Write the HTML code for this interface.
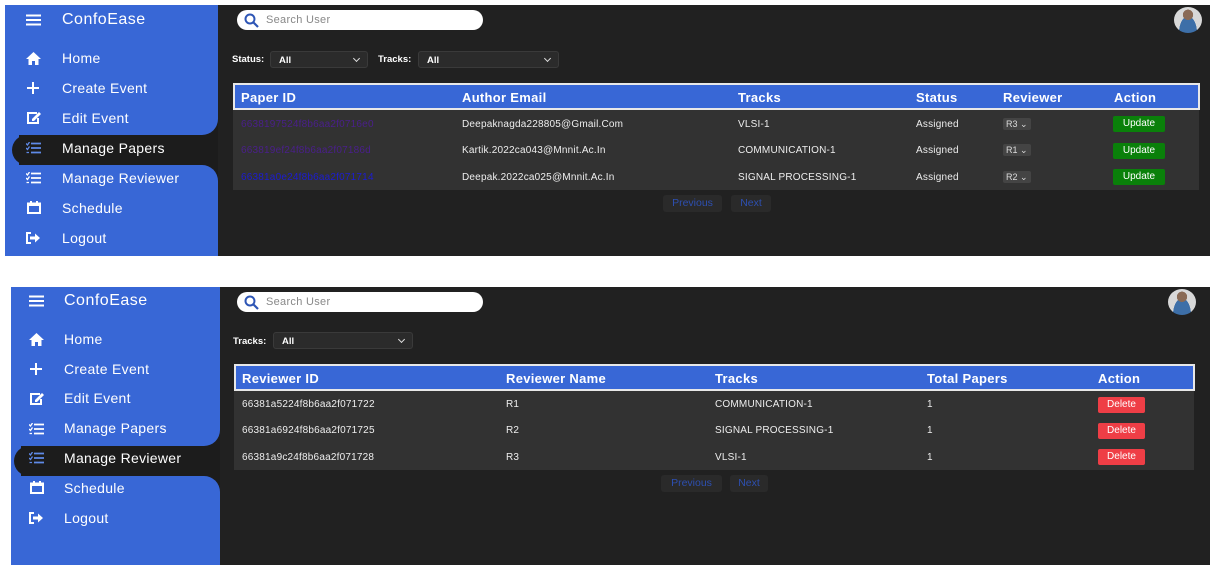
<!DOCTYPE html>
<html><head><meta charset="utf-8">
<style>
*{margin:0;padding:0;box-sizing:border-box}
body{width:1210px;height:565px;background:#fff;position:relative;overflow:hidden;font-family:"Liberation Sans",sans-serif}
svg{display:block}
.abs{position:absolute}
.main{position:absolute;background:#212121}
.sb{position:absolute;background:#1c1c1c}
.blue{background:#3867d6;position:absolute;left:0;right:0}
.pill{position:absolute;background:#1c1c1c;border-radius:16px 0 0 16px}
.mi{position:absolute;color:#fff;font-size:14px;white-space:nowrap;letter-spacing:.3px}
.ic{position:absolute}
.logo{position:absolute;color:#fff;font-size:16px;letter-spacing:.5px}
.search{position:absolute;background:#fff;border-radius:11px;height:20px;width:246px}
.search span{position:absolute;left:29px;top:4px;font-size:11px;color:#888;letter-spacing:.3px}
.lbl{position:absolute;color:#fff;font-size:9.5px;font-weight:bold}
.sel{position:absolute;background:#2b2b2b;border:1px solid #3a3a3a;border-radius:3px;color:#fff;font-size:9.5px;font-weight:bold;padding:3px 0 0 8px}
.sel:after{content:"";position:absolute;right:8px;top:4px;width:4px;height:4px;border-right:1.5px solid #ddd;border-bottom:1.5px solid #ddd;transform:rotate(45deg)}
.thead{position:absolute;background:#3867d6;border:2px solid #e8e8e8;height:26px}
.th{position:absolute;color:#fff;font-weight:bold;font-size:13px;top:5px;letter-spacing:.3px}
.tbody{position:absolute;background:#323232}
.td{position:absolute;color:#eee;font-size:10px;letter-spacing:.2px}
.btn{position:absolute;color:#fff;font-size:10px;text-align:center;border-radius:2px}
.upd{background:#0a800a;width:52px;height:16px;line-height:16px}
.del{background:#ef3e46;width:47px;height:16px;line-height:16px}
.rv{position:absolute;background:#444;border-radius:2px;color:#ddd;font-size:9px;height:12px;line-height:12px;padding-left:3px;width:28px}
.pg{position:absolute;background:#2a2a2a;border-radius:3px;color:#2d4fb0;font-size:10.5px;text-align:center;height:17px;line-height:17px}
.av{position:absolute;width:28px;height:26px;border-radius:50%;background:radial-gradient(circle at 50% 30%,#8a6a55 0 22%,transparent 23%),radial-gradient(ellipse at 50% 100%,#3d6fa8 0 45%,transparent 46%),#d8d8d8}
</style></head><body>

<!-- PANEL 1 -->
<div class="main" style="left:5px;top:5px;width:1205px;height:251px"></div>
<div class="sb" style="left:5px;top:5px;width:213px;height:251px">
  <div class="blue" style="top:0;height:130px;border-bottom-right-radius:16px"></div>
  <div class="blue" style="top:130px;height:30px;width:14px;right:auto"></div>
  <div class="pill" style="left:7px;top:130px;width:206px;height:30px"></div>
  <div class="blue" style="top:160px;height:91px;border-top-right-radius:16px"></div>
</div>
<div class="ic" style="left:26px;top:14px"><svg width="15" height="12"><path d="M0 1.5H15M0 6H15M0 10.5H15" stroke="#fff" stroke-width="2"/></svg></div>
<div class="logo" style="left:62px;top:11px">ConfoEase</div>

<div class="ic" style="left:26px;top:52px"><svg width="15" height="13"><path d="M7.5 0L0 7H2.5V13H6V9H9V13H12.5V7H15Z" fill="#fff"/></svg></div>
<div class="mi" style="left:62px;top:50px">Home</div>
<div class="ic" style="left:27px;top:82px"><svg width="12" height="12"><path d="M6 0V12M0 6H12" stroke="#fff" stroke-width="2"/></svg></div>
<div class="mi" style="left:62px;top:80px">Create Event</div>
<div class="ic" style="left:26px;top:111px"><svg width="15" height="14"><path d="M11 2H2V12H12V7" stroke="#fff" stroke-width="2" fill="none"/><path d="M6 8L13 1L15 3L8 10H6Z" fill="#fff"/></svg></div>
<div class="mi" style="left:62px;top:110px">Edit Event</div>
<div class="ic" style="left:26px;top:142px"><svg width="15" height="12"><path d="M5 1.5H15M5 6H15M5 10.5H15" stroke="#5f8ae8" stroke-width="1.8"/><path d="M0 1.5L1.5 3L3.5 0M0 6L1.5 7.5L3.5 4.5M0.5 10.5H3" stroke="#5f8ae8" stroke-width="1.3" fill="none"/></svg></div>
<div class="mi" style="left:62px;top:140px">Manage Papers</div>
<div class="ic" style="left:26px;top:172px"><svg width="15" height="12"><path d="M5 1.5H15M5 6H15M5 10.5H15" stroke="#fff" stroke-width="1.8"/><path d="M0 1.5L1.5 3L3.5 0M0 6L1.5 7.5L3.5 4.5M0.5 10.5H3" stroke="#fff" stroke-width="1.3" fill="none"/></svg></div>
<div class="mi" style="left:62px;top:170px">Manage Reviewer</div>
<div class="ic" style="left:27px;top:201px"><svg width="14" height="13"><rect x="1" y="2.5" width="12" height="9.5" stroke="#fff" stroke-width="2" fill="none"/><path d="M4 0V3M10 0V3M1 4H13" stroke="#fff" stroke-width="2"/></svg></div>
<div class="mi" style="left:62px;top:200px">Schedule</div>
<div class="ic" style="left:26px;top:232px"><svg width="15" height="12"><path d="M5 1H1V11H5" stroke="#fff" stroke-width="2" fill="none"/><path d="M4 4.5H9V1.5L14 6L9 10.5V7.5H4Z" fill="#fff"/></svg></div>
<div class="mi" style="left:62px;top:230px">Logout</div>

<div class="search" style="left:237px;top:10px"><svg class="abs" style="left:7px;top:3px" width="15" height="15"><circle cx="6" cy="6" r="4.5" stroke="#2d55b5" stroke-width="2" fill="none"/><path d="M9.5 9.5L14 14" stroke="#2d55b5" stroke-width="2.2"/></svg><span>Search User</span></div>
<div class="av" style="left:1174px;top:7px"></div>

<div class="lbl" style="left:232px;top:54px">Status:</div>
<div class="sel" style="left:270px;top:51px;width:98px;height:17px">All</div>
<div class="lbl" style="left:378px;top:54px">Tracks:</div>
<div class="sel" style="left:418px;top:51px;width:141px;height:17px">All</div>

<div class="thead" style="left:233px;top:83px;width:967px;height:27px"></div>
<div class="th" style="left:241px;top:90px">Paper ID</div>
<div class="th" style="left:462px;top:90px">Author Email</div>
<div class="th" style="left:738px;top:90px">Tracks</div>
<div class="th" style="left:916px;top:90px">Status</div>
<div class="th" style="left:1003px;top:90px">Reviewer</div>
<div class="th" style="left:1114px;top:90px">Action</div>
<div class="tbody" style="left:233px;top:110px;width:966px;height:80px"></div>

<div class="td" style="left:241px;top:119px;color:#4a1f8c">6638197524f8b6aa2f0716e0</div>
<div class="td" style="left:462px;top:119px">Deepaknagda228805@Gmail.Com</div>
<div class="td" style="left:738px;top:119px">VLSI-1</div>
<div class="td" style="left:916px;top:119px">Assigned</div>
<div class="rv" style="left:1003px;top:118px">R3 ⌄</div>
<div class="btn upd" style="left:1113px;top:116px">Update</div>

<div class="td" style="left:241px;top:145px;color:#4a1f8c">663819ef24f8b6aa2f07186d</div>
<div class="td" style="left:462px;top:145px">Kartik.2022ca043@Mnnit.Ac.In</div>
<div class="td" style="left:738px;top:145px">COMMUNICATION-1</div>
<div class="td" style="left:916px;top:145px">Assigned</div>
<div class="rv" style="left:1003px;top:144px">R1 ⌄</div>
<div class="btn upd" style="left:1113px;top:143px">Update</div>

<div class="td" style="left:241px;top:172px;color:#1c1cd0">66381a0e24f8b6aa2f071714</div>
<div class="td" style="left:462px;top:172px">Deepak.2022ca025@Mnnit.Ac.In</div>
<div class="td" style="left:738px;top:172px">SIGNAL PROCESSING-1</div>
<div class="td" style="left:916px;top:172px">Assigned</div>
<div class="rv" style="left:1003px;top:171px">R2 ⌄</div>
<div class="btn upd" style="left:1113px;top:169px">Update</div>

<div class="pg" style="left:663px;top:195px;width:59px">Previous</div>
<div class="pg" style="left:731px;top:195px;width:40px">Next</div>

<!-- PANEL 2 -->
<div class="main" style="left:11px;top:287px;width:1199px;height:278px"></div>
<div class="sb" style="left:11px;top:287px;width:209px;height:278px">
  <div class="blue" style="top:0;height:159px;border-bottom-right-radius:16px"></div>
  <div class="blue" style="top:159px;height:30px;width:10px;right:auto"></div>
  <div class="pill" style="left:3px;top:159px;width:206px;height:30px"></div>
  <div class="blue" style="top:189px;height:89px;border-top-right-radius:16px"></div>
</div>
<div class="ic" style="left:29px;top:295px"><svg width="15" height="12"><path d="M0 1.5H15M0 6H15M0 10.5H15" stroke="#fff" stroke-width="2"/></svg></div>
<div class="logo" style="left:64px;top:292px">ConfoEase</div>

<div class="ic" style="left:29px;top:333px"><svg width="15" height="13"><path d="M7.5 0L0 7H2.5V13H6V9H9V13H12.5V7H15Z" fill="#fff"/></svg></div>
<div class="mi" style="left:64px;top:331px">Home</div>
<div class="ic" style="left:30px;top:363px"><svg width="12" height="12"><path d="M6 0V12M0 6H12" stroke="#fff" stroke-width="2"/></svg></div>
<div class="mi" style="left:64px;top:361px">Create Event</div>
<div class="ic" style="left:29px;top:392px"><svg width="15" height="14"><path d="M11 2H2V12H12V7" stroke="#fff" stroke-width="2" fill="none"/><path d="M6 8L13 1L15 3L8 10H6Z" fill="#fff"/></svg></div>
<div class="mi" style="left:64px;top:390px">Edit Event</div>
<div class="ic" style="left:29px;top:423px"><svg width="15" height="12"><path d="M5 1.5H15M5 6H15M5 10.5H15" stroke="#fff" stroke-width="1.8"/><path d="M0 1.5L1.5 3L3.5 0M0 6L1.5 7.5L3.5 4.5M0.5 10.5H3" stroke="#fff" stroke-width="1.3" fill="none"/></svg></div>
<div class="mi" style="left:64px;top:420px">Manage Papers</div>
<div class="ic" style="left:29px;top:452px"><svg width="15" height="12"><path d="M5 1.5H15M5 6H15M5 10.5H15" stroke="#5f8ae8" stroke-width="1.8"/><path d="M0 1.5L1.5 3L3.5 0M0 6L1.5 7.5L3.5 4.5M0.5 10.5H3" stroke="#5f8ae8" stroke-width="1.3" fill="none"/></svg></div>
<div class="mi" style="left:64px;top:450px">Manage Reviewer</div>
<div class="ic" style="left:30px;top:481px"><svg width="14" height="13"><rect x="1" y="2.5" width="12" height="9.5" stroke="#fff" stroke-width="2" fill="none"/><path d="M4 0V3M10 0V3M1 4H13" stroke="#fff" stroke-width="2"/></svg></div>
<div class="mi" style="left:64px;top:480px">Schedule</div>
<div class="ic" style="left:29px;top:512px"><svg width="15" height="12"><path d="M5 1H1V11H5" stroke="#fff" stroke-width="2" fill="none"/><path d="M4 4.5H9V1.5L14 6L9 10.5V7.5H4Z" fill="#fff"/></svg></div>
<div class="mi" style="left:64px;top:510px">Logout</div>

<div class="search" style="left:237px;top:292px"><svg class="abs" style="left:7px;top:3px" width="15" height="15"><circle cx="6" cy="6" r="4.5" stroke="#2d55b5" stroke-width="2" fill="none"/><path d="M9.5 9.5L14 14" stroke="#2d55b5" stroke-width="2.2"/></svg><span>Search User</span></div>
<div class="av" style="left:1168px;top:289px"></div>

<div class="lbl" style="left:233px;top:336px">Tracks:</div>
<div class="sel" style="left:273px;top:332px;width:140px;height:17px">All</div>

<div class="thead" style="left:234px;top:364px;width:961px;height:27px"></div>
<div class="th" style="left:242px;top:371px">Reviewer ID</div>
<div class="th" style="left:506px;top:371px">Reviewer Name</div>
<div class="th" style="left:715px;top:371px">Tracks</div>
<div class="th" style="left:927px;top:371px">Total Papers</div>
<div class="th" style="left:1098px;top:371px">Action</div>
<div class="tbody" style="left:234px;top:391px;width:960px;height:79px"></div>

<div class="td" style="left:242px;top:399px">66381a5224f8b6aa2f071722</div>
<div class="td" style="left:506px;top:399px">R1</div>
<div class="td" style="left:715px;top:399px">COMMUNICATION-1</div>
<div class="td" style="left:927px;top:399px">1</div>
<div class="btn del" style="left:1098px;top:397px">Delete</div>

<div class="td" style="left:242px;top:425px">66381a6924f8b6aa2f071725</div>
<div class="td" style="left:506px;top:425px">R2</div>
<div class="td" style="left:715px;top:425px">SIGNAL PROCESSING-1</div>
<div class="td" style="left:927px;top:425px">1</div>
<div class="btn del" style="left:1098px;top:423px">Delete</div>

<div class="td" style="left:242px;top:452px">66381a9c24f8b6aa2f071728</div>
<div class="td" style="left:506px;top:452px">R3</div>
<div class="td" style="left:715px;top:452px">VLSI-1</div>
<div class="td" style="left:927px;top:452px">1</div>
<div class="btn del" style="left:1098px;top:449px">Delete</div>

<div class="pg" style="left:661px;top:475px;width:61px">Previous</div>
<div class="pg" style="left:730px;top:475px;width:38px">Next</div>
</body></html>
